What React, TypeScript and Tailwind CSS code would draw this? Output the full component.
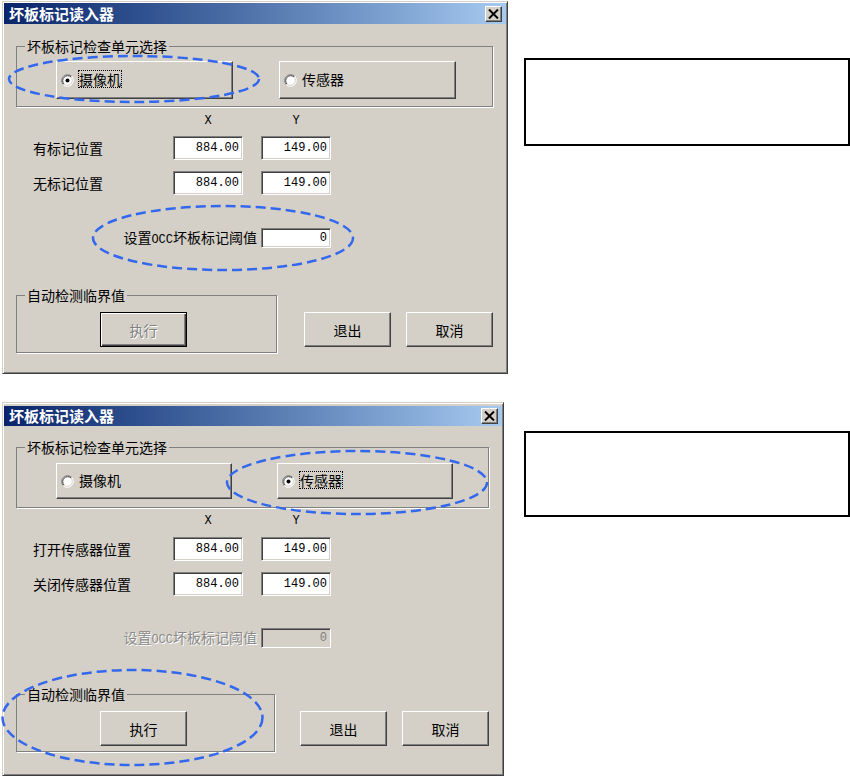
import React from 'react';

const CJK = "font-['Noto_Sans_CJK_SC','Noto_Sans',sans-serif]";
const MONO = "font-['Liberation_Mono','DejaVu_Sans_Mono',monospace]";

const RAISED =
  'bg-[#d4d0c8] border border-t-white border-l-white border-r-[#404040] border-b-[#404040] shadow-[inset_-1px_-1px_0_#808080]';
const DEFAULT_BTN =
  'bg-[#d4d0c8] border border-black shadow-[inset_1px_1px_0_#fff,inset_-1px_-1px_0_#404040,inset_-2px_-2px_0_#808080]';
const SUNKEN =
  'border border-t-[#808080] border-l-[#808080] border-r-white border-b-white shadow-[inset_1px_1px_0_#404040,inset_-1px_-1px_0_#d4d0c8]';
const GROUP =
  'border border-[#808080] shadow-[1px_1px_0_#fff] min-w-0 m-0 p-0';

function RadioCircle({ checked }: { checked: boolean }) {
  return (
    <svg width="13" height="13" viewBox="0 0 13 13" className="shrink-0">
      <circle cx="6.5" cy="6.5" r="5.5" fill="#fff" />
      <path d="M 2.26 10.74 A 6 6 0 0 1 10.74 2.26" stroke="#808080" strokeWidth="1" fill="none" />
      <path d="M 10.74 2.26 A 6 6 0 0 1 2.26 10.74" stroke="#ffffff" strokeWidth="1" fill="none" />
      <path d="M 2.97 10.03 A 5 5 0 0 1 10.03 2.97" stroke="#404040" strokeWidth="1" fill="none" />
      <path d="M 10.03 2.97 A 5 5 0 0 1 2.97 10.03" stroke="#d4d0c8" strokeWidth="1" fill="none" />
      {checked && <circle cx="6.5" cy="6.5" r="2" fill="#000" />}
    </svg>
  );
}

function RadioBtn({ label, checked, one }: { label: string; checked: boolean; one: boolean }) {
  return (
    <div className={`${RAISED} flex items-center pl-[4px] ${one ? 'w-[177px] h-[38px]' : 'w-[176px] h-[36px]'}`}>
      <RadioCircle checked={checked} />
      <span
        className={`ml-[4px] mb-[2px] text-[14px] leading-[16px] text-black ${
          checked ? 'border border-dotted border-black' : 'border border-transparent'
        }`}
      >
        {label}
      </span>
    </div>
  );
}

function Field({ value, disabled = false, tall = true }: { value: string; disabled?: boolean; tall?: boolean }) {
  return (
    <div
      className={`${SUNKEN} w-[70px] ${tall ? 'h-[24px]' : 'h-[20px]'} ${
        disabled ? 'bg-[#d4d0c8] text-[#808080]' : 'bg-white text-black'
      } flex items-center justify-end pr-[3px] ${MONO} text-[12px] leading-[14px]`}
    >
      {value}
    </div>
  );
}

function CloseBtn() {
  return (
    <div className={`${RAISED} w-[17px] h-[16px] flex items-center justify-center`}>
      <svg width="11" height="10" viewBox="0 0 11 10">
        <path d="M1 0.5 L10 9.5 M10 0.5 L1 9.5" stroke="#000" strokeWidth="2" />
      </svg>
    </div>
  );
}

function Dialog({ v }: { v: 1 | 2 }) {
  const one = v === 1;
  return (
    <div
      className={`relative bg-[#d4d0c8] border border-t-[#d4d0c8] border-l-[#d4d0c8] border-r-[#404040] border-b-[#404040] shadow-[inset_1px_1px_0_#fff,inset_-1px_-1px_0_#808080] px-[1px] flex flex-col ml-[2px] ${
        one ? 'mt-[1px] w-[506px] h-[373px] pt-[1px]' : 'mt-[28px] w-[502px] h-[374px] pt-[3px]'
      }`}
    >
      {/* title bar */}
      <div
        className={`flex items-center justify-between bg-linear-to-r from-[#0a246a] to-[#a6caf0] pl-[5px] pr-[4px] ${
          one ? 'h-[21px]' : 'h-[20px]'
        }`}
      >
        <span className="text-white font-bold text-[15px] leading-[18px]">坏板标记读入器</span>
        <CloseBtn />
      </div>

      <div className="flex flex-col pl-[12px] pr-[13px] text-black">
        {/* group 1 */}
        <fieldset className={`${GROUP} ${one ? 'mt-[14px]' : 'mt-[13px]'}`}>
          <legend className="ml-[8px] px-[2px] text-[14px] leading-[16px]">坏板标记检查单元选择</legend>
          <div
            className={`flex justify-between pl-[39px] ${
              one ? 'pr-[36px] pt-[7px] pb-[7px]' : 'pr-[35px] pt-[8px] pb-[8px]'
            }`}
          >
            <RadioBtn label="摄像机" checked={one} one={one} />
            <RadioBtn label="传感器" checked={!one} one={one} />
          </div>
        </fieldset>

        {/* X / Y header */}
        <div
          className={`grid grid-cols-[122px_70px_70px] gap-x-[18px] pl-[17px] ${one ? 'mt-[7px]' : 'mt-[6px]'} ${MONO} text-[12px] leading-[14px]`}
        >
          <div />
          <div className="text-center">X</div>
          <div className="text-center">Y</div>
        </div>

        {/* rows */}
        <div
          className={`grid grid-cols-[122px_70px_70px] gap-x-[18px] gap-y-[11px] items-center pl-[17px] ${
            one ? 'mt-[8px]' : 'mt-[9px]'
          }`}
        >
          <div className="text-[14px] leading-[16px]">{one ? '有标记位置' : '打开传感器位置'}</div>
          <Field value="884.00" />
          <Field value="149.00" />
          <div className="text-[14px] leading-[16px]">{one ? '无标记位置' : '关闭传感器位置'}</div>
          <Field value="884.00" />
          <Field value="149.00" />
        </div>

        {/* threshold */}
        <div className={`flex items-center pl-[17px] ${one ? 'mt-[33px]' : 'mt-[32px]'}`}>
          <div
            className={`w-[228px] text-right pr-[4px] text-[14px] leading-[16px] ${
              one ? 'text-black' : 'text-[#8a8a8a] [text-shadow:1px_1px_0_#fff]'
            }`}
          >
            设置<span className={`${MONO} text-[12px]`}>OCC</span>坏板标记阈值
          </div>
          <Field value="0" tall={false} disabled={!one} />
        </div>

        {/* bottom */}
        <div className={`flex items-start ${one ? 'mt-[39px]' : 'mt-[38px]'}`}>
          <fieldset className={`${GROUP} ${one ? 'w-[261px]' : 'w-[259px]'}`}>
            <legend className="ml-[8px] px-[2px] text-[14px] leading-[16px]">自动检测临界值</legend>
            <div className="pl-[83px] pt-[9px] pb-[5px]">
              <div
                className={`${one ? DEFAULT_BTN : RAISED} w-[87px] h-[35px] flex items-center justify-center text-[14px] leading-[16px] ${
                  one ? 'text-[#808080] [text-shadow:1px_1px_0_#fff]' : 'text-black'
                }`}
              >
                执行
              </div>
            </div>
          </fieldset>
          <div className="ml-auto flex gap-[15px] mt-[25px]">
            <div className={`${RAISED} w-[87px] h-[35px] flex items-center justify-center text-[14px] leading-[16px]`}>
              退出
            </div>
            <div className={`${RAISED} w-[87px] h-[35px] flex items-center justify-center text-[14px] leading-[16px]`}>
              取消
            </div>
          </div>
        </div>
      </div>

      {/* dashed highlight ellipses */}
      <svg className="absolute inset-0 pointer-events-none overflow-visible" width="100%" height="100%">
        {one ? (
          <>
            <ellipse cx="131" cy="77" rx="125" ry="23" fill="none" stroke="#3368ee" strokeWidth="2.5" strokeDasharray="10 5" />
            <ellipse cx="220" cy="236" rx="130" ry="32" fill="none" stroke="#3368ee" strokeWidth="2.5" strokeDasharray="10 5" />
          </>
        ) : (
          <>
            <ellipse cx="354" cy="79.5" rx="130" ry="31.5" fill="none" stroke="#3368ee" strokeWidth="2.5" strokeDasharray="10 5" />
            <ellipse cx="129.5" cy="314.5" rx="130" ry="47.5" fill="none" stroke="#3368ee" strokeWidth="2.5" strokeDasharray="10 5" />
          </>
        )}
      </svg>
    </div>
  );
}

export default function App() {
  return (
    <div className={`w-[850px] h-[776px] bg-white flex overflow-hidden ${CJK}`}>
      <div className="w-[510px] flex flex-col shrink-0">
        <Dialog v={1} />
        <Dialog v={2} />
      </div>
      <div className="ml-[14px] w-[326px] flex flex-col shrink-0">
        <div className="mt-[58px] h-[88px] bg-white border-2 border-black" />
        <div className="mt-[285px] h-[86px] bg-white border-2 border-black" />
      </div>
    </div>
  );
}
